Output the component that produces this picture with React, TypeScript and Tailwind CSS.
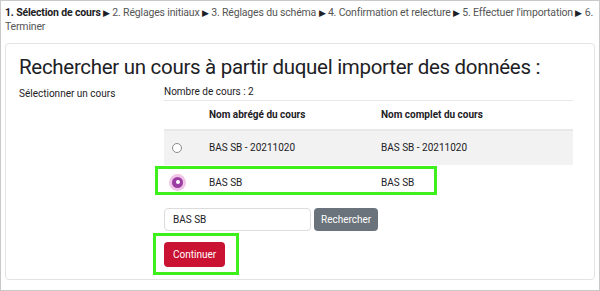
const steps = [
  "2. Réglages initiaux",
  "3. Réglages du schéma",
  "4. Confirmation et relecture",
  "5. Effectuer l'importation",
  "6. Terminer",
];

const courses = [
  { id: 1, shortName: "BAS SB - 20211020", fullName: "BAS SB - 20211020", selected: false },
  { id: 2, shortName: "BAS SB", fullName: "BAS SB", selected: true },
];

function Radio({ checked }: { checked: boolean }) {
  if (checked) {
    return (
      <span className="flex h-[11px] w-[11px] items-center justify-center rounded-full bg-[#9b3ba3] ring-[3px] ring-[#f0c6e6]">
        <span className="h-[4px] w-[4px] rounded-full bg-white" />
      </span>
    );
  }
  return <span className="block h-[10px] w-[10px] rounded-full border border-[#8a8a8a] bg-white" />;
}

export default function App() {
  return (
    <div className="h-[291px] w-[600px] overflow-hidden border border-[#c9c9c9] bg-white font-['Roboto',Arial,sans-serif] text-[#1d2125]">
      <div className="px-[4px] pt-[5px] text-[10.5px] leading-[14px] tracking-[-0.17px] text-[#555]">
        <b className="text-[#1d2125]">1. Sélection de cours</b>
        {steps.map((s) => (
          <span key={s}>
            {" "}
            <span className="text-[9px] text-[#1d2125]">▶</span> {s}
          </span>
        ))}
      </div>

      <div className="mx-[4px] mt-[9px] h-[237px] rounded-[4px] border border-[#e3e3e3] px-[13px] pt-[8px]">
        <h2 className="whitespace-nowrap text-[20.5px] leading-[30px] tracking-[-0.3px] text-[#1d2125]">
          Rechercher un cours à partir duquel importer des données :
        </h2>

        <div className="mt-[3px] flex text-[10px]">
          <div className="w-[145px] pt-[1px]">Sélectionner un cours</div>

          <div className="flex-1 pr-[8px]">
            <div className="leading-[14px]">Nombre de cours : 2</div>
            <table className="mt-[1px] w-full border-collapse">
              <thead>
                <tr className="border-t border-b-2 border-[#e8e8e8]">
                  <th className="w-[45px]" />
                  <th className="h-[29px] w-[172px] text-left font-bold">Nom abrégé du cours</th>
                  <th className="text-left font-bold">Nom complet du cours</th>
                </tr>
              </thead>
              <tbody>
                {courses.map((c) => (
                  <tr key={c.id} className={c.selected ? "bg-white" : "bg-[#f2f2f2]"}>
                    <td className="relative h-[35px] pl-[8px]">
                      <Radio checked={c.selected} />
                      {c.selected && (
                        <span className="pointer-events-none absolute left-[-9px] top-[1px] h-[29px] w-[282px] border-[3px] border-[#3df01c]" />
                      )}
                    </td>
                    <td>{c.shortName}</td>
                    <td>{c.fullName}</td>
                  </tr>
                ))}
              </tbody>
            </table>

            <div className="mt-[8px] flex gap-[3px]">
              <input
                readOnly
                value="BAS SB"
                className="h-[23px] w-[147px] rounded-[4px] border border-[#dcdcdc] px-[8px] text-[10px] text-[#1d2125] outline-none"
              />
              <button className="h-[23px] rounded-[4px] bg-[#6a737b] px-[7px] text-[10px] text-white">
                Rechercher
              </button>
            </div>

            <div className="relative mt-[11px] inline-block">
              <button className="h-[25px] rounded-[4px] bg-[#ca1332] px-[9px] text-[10px] text-white">
                Continuer
              </button>
              <span className="pointer-events-none absolute left-[-11px] top-[-9px] h-[42px] w-[86px] border-[3px] border-[#3df01c]" />
            </div>
          </div>
        </div>
      </div>
    </div>
  );
}
